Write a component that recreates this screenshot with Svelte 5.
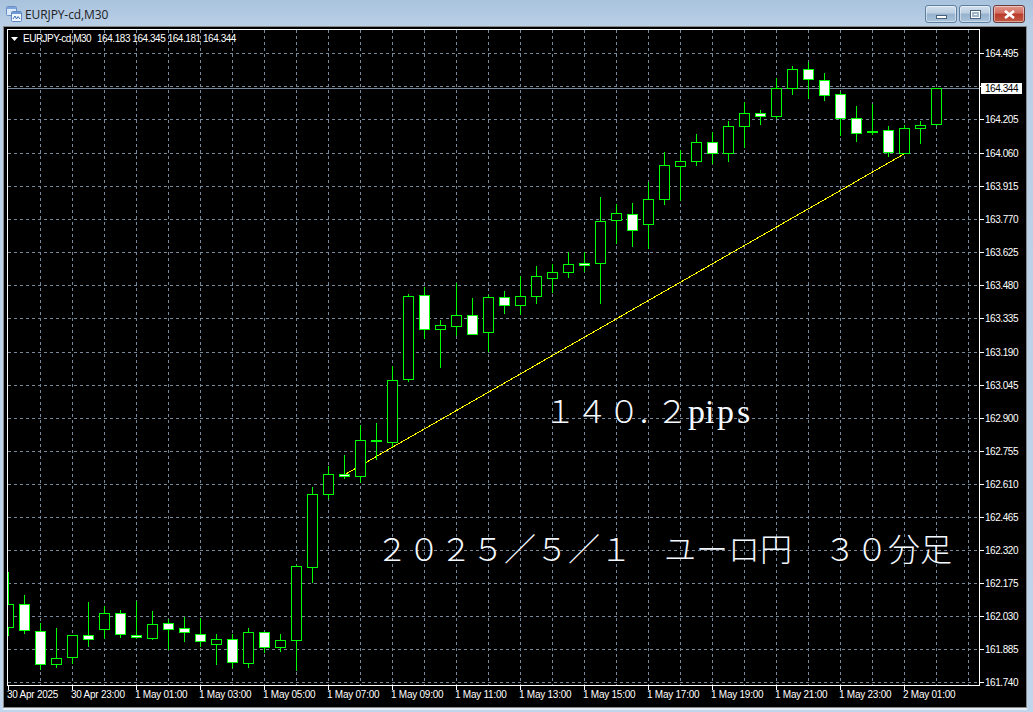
<script>
  const candles = [
    [572,604,627,635,0],[595,604,630,633,1],[623,631,664,669,1],[628,658,664,667,0],[635,635,657,663,0],
    [602,635,639,646,1],[606,613,629,638,0],[610,613,634,637,1],[601,635,637,638,1],[611,624,638,639,0],
    [619,623,629,649,1],[617,628,632,641,1],[618,634,641,646,1],[634,639,644,664,0],[634,639,662,667,1],
    [628,632,663,667,0],[632,632,647,652,1],[634,640,647,651,0],[565,566,640,670,0],[487,494,567,582,0],
    [466,474,494,498,0],[455,474,476,478,1],[425,440,476,482,0],[423,440,441,459,1],[366,380,442,446,0],
    [294,296,379,381,0],[287,295,329,338,1],[320,325,329,367,0],[283,315,326,335,0],[298,315,334,334,1],
    [295,297,332,351,0],[291,297,305,313,1],[276,296,305,314,0],[266,276,296,303,0],[264,272,278,292,0],
    [252,264,272,277,0],[252,263,265,271,1],[197,221,263,303,0],[204,213,220,243,0],[203,214,230,246,1],
    [182,199,224,248,0],[152,165,199,204,0],[150,161,166,200,0],[134,142,161,165,0],[132,142,153,163,1],
    [121,126,153,161,0],[102,113,126,147,0],[110,113,116,124,1],[78,88,116,118,0],[66,69,88,94,0],
    [62,69,79,98,1],[73,80,95,100,1],[92,94,118,135,1],[106,118,133,141,1],[104,131,132,134,1],
    [126,130,152,156,1],[125,128,153,153,0],[121,125,128,143,0],[88,88,124,125,0]
  ].map(([high, top, bottom, low, white], i) => ({ x: 8 + 16 * i, high, top, bottom, low, white }));

  const prices = [
    ['164.495',53],['164.205',119],['164.060',153],['163.915',186],['163.770',219],['163.625',252],
    ['163.480',285],['163.335',318],['163.190',352],['163.045',385],['162.900',418],['162.755',451],
    ['162.610',484],['162.465',517],['162.320',550],['162.175',583],['162.030',616],['161.885',649],['161.740',682]
  ];
  const gridY = [53,86,119,153,186,219,252,285,318,352,385,418,451,484,517,550,583,616,649,682];
  const gridX = Array.from({ length: 30 }, (_, i) => 40 + 32 * i);
  const times = ['30 Apr 2025','30 Apr 23:00','1 May 01:00','1 May 03:00','1 May 05:00','1 May 07:00','1 May 09:00',
    '1 May 11:00','1 May 13:00','1 May 15:00','1 May 17:00','1 May 19:00','1 May 21:00','1 May 23:00','2 May 01:00'];
</script>

<div class="window">
  <header class="titlebar">
    <svg class="app-icon" viewBox="0 0 16 16" width="16" height="16" aria-hidden="true">
      <rect x="0.5" y="0.5" width="10" height="9" rx="1" fill="#dbeafa" stroke="#6b8fc4"/>
      <rect x="1" y="1" width="9" height="2" fill="#7fa6dc"/>
      <rect x="5.5" y="5.5" width="10" height="10" rx="1" fill="#f2f8ff" stroke="#5f86c0"/>
      <rect x="6" y="6" width="9" height="2" fill="#6f9ad6"/>
      <path d="M7 13 L9 10 L10.5 13 L12 10.5 L14 13" fill="none" stroke="#3f6fb5"/>
    </svg>
    <span class="title">EURJPY-cd,M30</span>
    <div class="buttons">
      <button class="btn" aria-label="Minimize"><span class="min-glyph"></span></button>
      <button class="btn" aria-label="Maximize"><span class="max-glyph"></span></button>
      <button class="btn close" aria-label="Close">
        <svg viewBox="0 0 14 10" width="13" height="9" aria-hidden="true">
          <path d="M2 1 L12 9 M12 1 L2 9" stroke="#fff" stroke-width="2.8" fill="none"/>
        </svg>
      </button>
    </div>
  </header>

  <div class="chart-frame">
    <svg class="chart" viewBox="4 27 1022 680" width="1022" height="680">
      <defs>
        <clipPath id="plot"><rect x="8" y="30" width="971" height="655"/></clipPath>
      </defs>

      <g class="crisp">
        {#each gridX as x}
          <line class="grid" x1={x + 0.5} y1="30" x2={x + 0.5} y2="685"/>
        {/each}
        {#each gridY as y}
          <line class="grid" x1="8" y1={y + 0.5} x2="979" y2={y + 0.5}/>
        {/each}
        <line class="bid" x1="8" y1="88.5" x2="979" y2="88.5"/>
        <line class="trend" x1="344" y1="475" x2="904" y2="154"/>

        <g clip-path="url(#plot)">
          {#each candles as c}
            <line class="wick" x1={c.x + 0.5} y1={c.high} x2={c.x + 0.5} y2={c.low + 1}/>
            <rect class={c.white ? 'body white' : 'body'} x={c.x - 4.5} y={c.top + 0.5} width="10" height={c.bottom - c.top}/>
          {/each}
        </g>

        <rect class="axis" x="7.5" y="29.5" width="972" height="656"/>
        {#each gridY as y}
          <line class="tick" x1="980" y1={y + 0.5} x2="984" y2={y + 0.5}/>
        {/each}
        {#each times as _, i}
          <line class="tick" x1={8.5 + 64 * i} y1="686" x2={8.5 + 64 * i} y2="690"/>
        {/each}
      </g>

      <path class="legend-arrow" d="M11 37 H18 L14.5 41 Z"/>
      <text class="small tight" x="23" y="42">EURJPY-cd,M30</text>
      <text class="small num" x="97" y="42">164.183 164.345 164.181 164.344</text>

      {#each prices as [label, y]}
        <text class="small num" x="985" y={y + 4}>{label}</text>
      {/each}
      <rect class="bid-box" x="981" y="83" width="41" height="11"/>
      <text class="small num dark" x="985" y="92">164.344</text>

      {#each times as label, i}
        <text class="small" x={7 + 64 * i} y="698">{label}</text>
      {/each}

      <text class="note" x="544" y="423">１４０<tspan class="dot">.</tspan>２<tspan class="latin" x="688 705 717 737">pips</tspan></text>
      <text class="note" x="376" y="561">２０２５／５／１　ユーロ円　３０分足</text>
    </svg>
  </div>
</div>

<style>
  :global(body) {
    margin: 0;
    background: #bcd3ea;
  }

  .window {
    width: 1033px;
    height: 712px;
    display: flex;
    flex-direction: column;
    background: linear-gradient(#a9c3de 0, #b9cfe6 26px, #bed5ec 100%);
    overflow: hidden;
  }

  .titlebar {
    height: 27px;
    flex: none;
    display: flex;
    align-items: flex-start;
    box-sizing: border-box;
    padding: 6px 8px 0 6px;
  }

  .app-icon {
    flex: none;
  }

  .title {
    margin-left: 3px;
    font: 12px/18px "Open Sans", "Noto Sans", sans-serif;
    letter-spacing: -0.1px;
    color: #222;
  }

  .buttons {
    margin-left: auto;
    margin-top: -1px;
    display: flex;
    gap: 2px;
  }

  .btn {
    width: 32px;
    height: 18px;
    padding: 0;
    display: flex;
    align-items: center;
    justify-content: center;
    box-sizing: border-box;
    border: 1px solid #5f7f9f;
    border-radius: 3px;
    background: linear-gradient(#d3e1ef 0, #bacde0 45%, #95b1cc 50%, #a9c3db 100%);
    box-shadow: inset 0 0 0 1px rgba(255, 255, 255, 0.45);
  }

  .btn.close {
    border-color: #6d3a3a;
    background: linear-gradient(#e0958a 0, #d26e60 45%, #b93a2a 50%, #c25a45 100%);
  }

  .min-glyph {
    width: 11px;
    height: 4px;
    margin-top: 5px;
    box-sizing: border-box;
    background: #fff;
    border: 1px solid #47607c;
  }

  .max-glyph {
    width: 11px;
    height: 9px;
    box-sizing: border-box;
    background: #fff;
    border: 1px solid #47607c;
    box-shadow: inset 0 0 0 1px #fff, inset 0 0 0 3px #9fb6cc;
  }

  .chart-frame {
    flex: none;
    width: 1022px;
    height: 680px;
    margin-left: 4px;
    outline: 1px solid #8a8a8a;
    box-shadow: 0 2px 0 1px #e8eef5;
    background: #000;
  }

  .chart {
    display: block;
  }

  .crisp {
    shape-rendering: crispEdges;
  }

  .grid {
    stroke: #778899;
    stroke-dasharray: 3 3;
  }

  .bid {
    stroke: #778899;
  }

  .trend {
    stroke: #ffff00;
  }

  .wick {
    stroke: #00ff00;
  }

  .body {
    fill: #000;
    stroke: #00ff00;
  }

  .body.white {
    fill: #fff;
  }

  .axis {
    fill: none;
    stroke: #fff;
  }

  .tick {
    stroke: #fff;
  }

  .legend-arrow {
    fill: #fff;
  }

  .small {
    font: 10px "Liberation Sans", sans-serif;
    letter-spacing: -0.25px;
    fill: #fff;
  }

  .small.num {
    letter-spacing: -0.45px;
  }

  .small.tight {
    letter-spacing: -0.5px;
  }

  .small.dark {
    fill: #000;
  }

  .bid-box {
    fill: #fff;
  }

  .note {
    font: 300 32px "Liberation Serif", "Noto Sans CJK JP", serif;
    fill: #f4f8ff;
  }

  .dot {
    letter-spacing: 8px;
  }

  .latin {
    font-size: 34px;
  }
</style>
